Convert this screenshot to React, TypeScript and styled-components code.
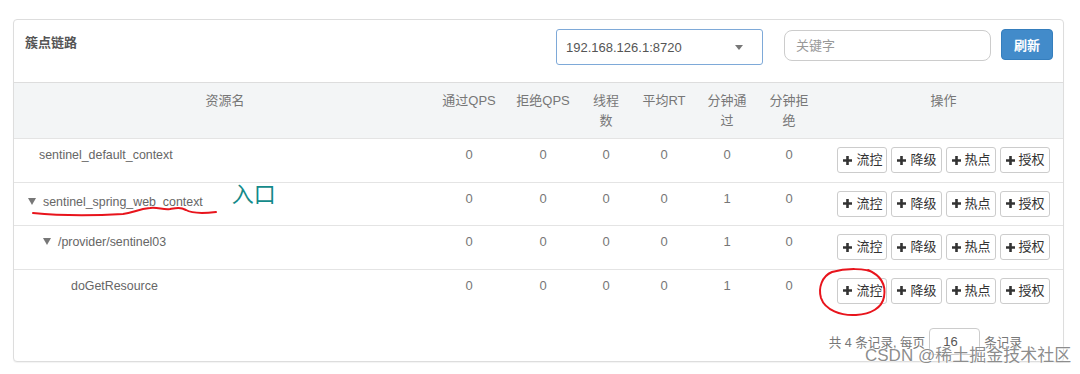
import React from 'react'
import styled, { createGlobalStyle } from 'styled-components'

type Row = {
    name: string
    indent: number
    toggle?: boolean
    pass: number
    minutePass: number
    note?: boolean
    circled?: boolean
}

const rows: Row[] = [
    { name: 'sentinel_default_context', indent: 25, pass: 0, minutePass: 0 },
    { name: 'sentinel_spring_web_context', indent: 14, toggle: true, pass: 0, minutePass: 1, note: true },
    { name: '/provider/sentinel03', indent: 29, toggle: true, pass: 0, minutePass: 1 },
    { name: 'doGetResource', indent: 57, pass: 0, minutePass: 1, circled: true },
]

const actions = ['流控', '降级', '热点', '授权']

const PlusIcon = () => (
    <svg width="9" height="9" viewBox="0 0 9 9">
        <path d="M3.2 0h2.6v3.2H9v2.6H5.8V9H3.2V5.8H0V3.2h3.2z" fill="#333" />
    </svg>
)

export const App = () => {
    return (
        <Page>
            <GlobalStyle />
            <Panel>
                <PanelHeader>
                    <Title>簇点链路</Title>
                    <Select>
                        <span>192.168.126.1:8720</span>
                        <Caret />
                    </Select>
                    <SearchInput placeholder='关键字' />
                    <RefreshButton>刷新</RefreshButton>
                </PanelHeader>

                <Table>
                    <colgroup>
                        <col style={{ width: 422 }} />
                        <col style={{ width: 66 }} />
                        <col style={{ width: 82 }} />
                        <col style={{ width: 44 }} />
                        <col style={{ width: 72 }} />
                        <col style={{ width: 54 }} />
                        <col style={{ width: 70 }} />
                        <col style={{ width: 239 }} />
                    </colgroup>
                    <thead>
                        <tr>
                            <Th>资源名</Th>
                            <Th>通过QPS</Th>
                            <Th>拒绝QPS</Th>
                            <Th>线程<br />数</Th>
                            <Th>平均RT</Th>
                            <Th>分钟通<br />过</Th>
                            <Th>分钟拒<br />绝</Th>
                            <Th>操作</Th>
                        </tr>
                    </thead>
                    <tbody>
                        {rows.map(row => (
                            <tr key={row.name}>
                                <NameCell indent={row.indent}>
                                    <NameWrap>
                                        {row.toggle && <Toggle />}
                                        {row.name}
                                        {row.note && (
                                            <>
                                                <Note>入口</Note>
                                                <Underline width="200" height="16" viewBox="0 0 200 16">
                                                    <path d="M5 9 C 25 11, 60 12, 95 10 C 105 9, 110 5, 122 4 C 130 3, 135 6, 142 5 C 148 4, 152 3, 158 6 C 163 9, 170 10, 188 8"
                                                        fill="none" stroke="#e8141c" strokeWidth="2" strokeLinecap="round" />
                                                </Underline>
                                            </>
                                        )}
                                    </NameWrap>
                                </NameCell>
                                <NumCell>{row.pass}</NumCell>
                                <NumCell>0</NumCell>
                                <NumCell>0</NumCell>
                                <NumCell>0</NumCell>
                                <NumCell>{row.minutePass}</NumCell>
                                <NumCell>0</NumCell>
                                <ActionCell>
                                    <ButtonGroup>
                                        {actions.map(a => (
                                            <ActionButton key={a}>
                                                <PlusIcon />
                                                {a}
                                            </ActionButton>
                                        ))}
                                        {row.circled && (
                                            <Circle width="80" height="56" viewBox="0 0 80 56">
                                                <path d="M58 9 C 50 4, 30 4, 16 8 C 6 12, 2 24, 5 34 C 9 46, 25 52, 40 51 C 55 50, 66 44, 68 33 C 70 22, 66 12, 52 6"
                                                    fill="none" stroke="#e8141c" strokeWidth="2" strokeLinecap="round" />
                                            </Circle>
                                        )}
                                    </ButtonGroup>
                                </ActionCell>
                            </tr>
                        ))}
                    </tbody>
                </Table>

                <Pager>
                    <PagerText>共 4 条记录, 每页</PagerText>
                    <PageSize>16</PageSize>
                    <PagerText>条记录</PagerText>
                </Pager>
            </Panel>
            <Watermark>CSDN @稀土掘金技术社区</Watermark>
        </Page>
    )
}

const GlobalStyle = createGlobalStyle`
    * { box-sizing: border-box; }
    body {
        margin: 0;
        background: #fff;
        font-family: "Liberation Sans", "Noto Sans CJK SC", sans-serif;
        font-size: 13px;
        color: #666;
    }
`

const Page = styled.div`
    position: relative;
    padding: 19px 16px 12px 13px;
    height: 374px;
    overflow: hidden;
`

const Panel = styled.div`
    border: 1px solid #ddd;
    border-radius: 4px;
    background: #fff;
    box-shadow: 0 1px 1px rgba(0, 0, 0, 0.05);
`

const PanelHeader = styled.div`
    display: flex;
    align-items: flex-start;
    height: 63px;
    padding: 9px 10px 0 11px;
    border-bottom: 1px solid #ddd;
`

const Title = styled.div`
    flex: 1;
    margin-top: 5px;
    line-height: 18px;
    font-weight: bold;
    color: #555;
`

const Select = styled.div`
    display: flex;
    align-items: center;
    justify-content: space-between;
    width: 207px;
    height: 36px;
    padding: 0 19px 0 9px;
    border: 1px solid #7ea9d8;
    border-radius: 3px;
    color: #555;
`

const Caret = styled.span`
    width: 0;
    height: 0;
    border-left: 4px solid transparent;
    border-right: 4px solid transparent;
    border-top: 5px solid #777;
`

const SearchInput = styled.input`
    margin: 1px 0 0 21px;
    width: 207px;
    height: 31px;
    padding: 0 11px;
    border: 1px solid #ccc;
    border-radius: 8px;
    font: inherit;
    color: #555;
    outline: none;
    &::placeholder { color: #999; }
`

const RefreshButton = styled.button`
    margin-left: 10px;
    width: 52px;
    height: 31px;
    border: 1px solid #357ebd;
    border-radius: 4px;
    background: #428bca;
    color: #fff;
    font: inherit;
    font-weight: bold;
    padding: 0;
`

const Table = styled.table`
    width: 100%;
    border-collapse: collapse;
    table-layout: fixed;
`

const Th = styled.th`
    background: #f3f5f6;
    color: #777;
    font-weight: normal;
    padding: 8px 4px;
    line-height: 19.5px;
    text-align: center;
    vertical-align: top;
`

const Td = styled.td`
    border-top: 1px solid #e4e4e4;
    padding: 7px 4px 8px;
    line-height: 18px;
    vertical-align: top;
    white-space: nowrap;
`

const NameCell = styled(Td)<{ indent: number }>`
    padding-left: ${p => p.indent}px;
    font-size: 12.4px;
    color: #666;
`

const NameWrap = styled.div`
    position: relative;
`

const Toggle = styled.span`
    display: inline-block;
    width: 0;
    height: 0;
    margin-right: 7px;
    border-left: 4px solid transparent;
    border-right: 4px solid transparent;
    border-top: 7px solid #777;
    vertical-align: 1px;
`

const Note = styled.span`
    display: inline-block;
    margin-left: 29px;
    font-size: 22px;
    line-height: 18px;
    color: #148a8a;
    transform: translateY(-4px);
`

const Underline = styled.svg`
    position: absolute;
    left: 0;
    top: 14px;
    pointer-events: none;
`

const NumCell = styled(Td)`
    text-align: center;
    color: #777;
`

const ActionCell = styled(Td)`
    padding: 8px 4px 8.5px;
`

const ButtonGroup = styled.div`
    position: relative;
    display: flex;
    justify-content: center;
    gap: 4px;
`

const ActionButton = styled.button`
    display: flex;
    align-items: center;
    gap: 4px;
    height: 26px;
    padding: 0 4px 0 5px;
    border: 1px solid #ccc;
    border-radius: 3px;
    background: #fff;
    color: #333;
    font: inherit;
`

const Circle = styled.svg`
    position: absolute;
    left: -12px;
    top: -14px;
    pointer-events: none;
`

const Pager = styled.div`
    display: flex;
    justify-content: flex-end;
    align-items: center;
    padding: 16px 41px 6px 0;
    color: #777;
`

const PagerText = styled.span`
    font-size: 12.6px;
`

const PageSize = styled.div`
    width: 51px;
    height: 27px;
    margin: 0 4px 0 4px;
    padding-left: 13px;
    border: 1px solid #ccc;
    border-radius: 4px;
    line-height: 25px;
    color: #555;
`

const Watermark = styled.div`
    position: absolute;
    left: 865px;
    top: 345px;
    font-size: 17px;
    line-height: 22px;
    white-space: nowrap;
    color: rgba(110, 110, 110, 0.8);
    text-shadow: 0 0 2px #fff, 0 0 1px #fff;
`

export default App
